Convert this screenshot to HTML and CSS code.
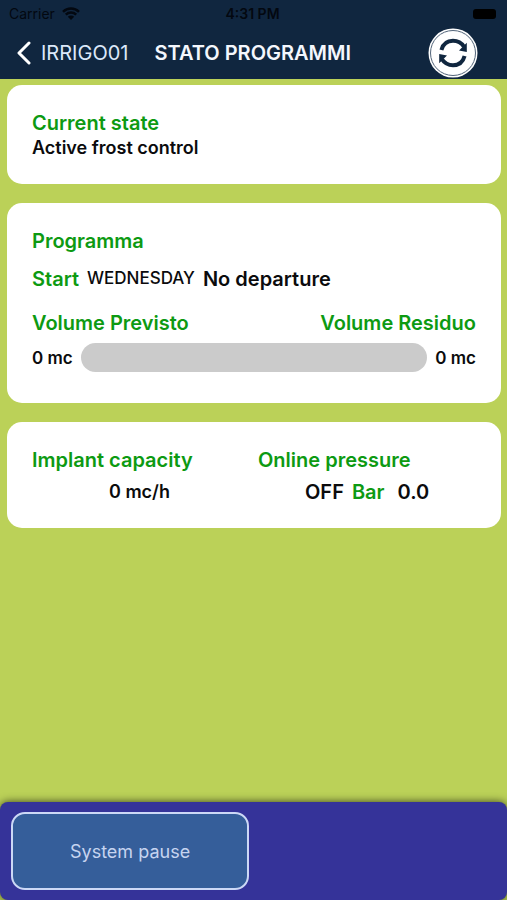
FILE: index.html
```html
<!DOCTYPE html>
<html lang="en">
<head>
<meta charset="utf-8">
<meta name="viewport" content="width=device-width, initial-scale=1">
<title>Stato programmi</title>
<link rel="stylesheet" href="styles.css">
</head>
<body>
<div class="app">
  <header class="header">
    <div class="status">
      <span class="carrier">Carrier
        <svg class="wifi" viewBox="0 0 18 13" aria-hidden="true">
          <path d="M1 4.800a11.500 11.500 0 0 1 16 0M3.800 7.700a7.500 7.500 0 0 1 10.400 0"/>
          <path class="dot" d="M9 13 5.800 9.800a4.600 4.600 0 0 1 6.400 0z"/>
        </svg>
      </span>
      <span class="time">4:31 PM</span>
      <span class="battery-slot"><span class="battery"></span></span>
    </div>
    <nav class="nav">
      <a class="back" href="#">
        <svg class="chevron" viewBox="0 0 14 24" aria-hidden="true"><path d="M12 2 2 12l10 10"/></svg>
        IRRIGO01
      </a>
      <h1 class="title">STATO PROGRAMMI</h1>
      <button class="refresh" type="button" aria-label="Refresh">
        <svg viewBox="0 0 50 50" aria-hidden="true">
          <circle class="disc" cx="25" cy="25" r="24.500"/>
          <circle class="ring" cx="25" cy="25" r="22.500"/>
          <path class="arc" d="M13.400 22C15 16 19.500 12.800 25 12.800c4.800 0 8.600 2.200 11 6M36.600 28C35 34 30.500 37.200 25 37.200c-4.800 0-8.600-2.200-11-6"/>
          <path class="tip" d="M38.800 14.800V24L31 22.600zM11.200 35.200V26L19 27.400z"/>
        </svg>
      </button>
    </nav>
  </header>

  <main class="cards">
    <section class="card">
      <h2 class="label">Current state</h2>
      <p class="state">Active frost control</p>
    </section>

    <section class="card program">
      <h2 class="label">Programma</h2>
      <p class="start">
        <span class="label">Start</span>
        <span class="day">WEDNESDAY</span>
        <span class="value">No departure</span>
      </p>
      <div class="volumes">
        <span class="label">Volume Previsto</span>
        <span class="label">Volume Residuo</span>
      </div>
      <div class="meter">
        <span>0 mc</span>
        <div class="bar" role="progressbar" aria-label="Volume" aria-valuenow="0" aria-valuemin="0" aria-valuemax="100"></div>
        <span>0 mc</span>
      </div>
    </section>

    <section class="card readings">
      <div class="reading">
        <h2 class="label">Implant capacity</h2>
        <p class="capacity">0 mc/h</p>
      </div>
      <div class="reading">
        <h2 class="label">Online pressure</h2>
        <p class="pressure"><span>OFF</span> <span class="label">Bar</span> <span class="number">0.0</span></p>
      </div>
    </section>
  </main>

  <footer class="footer">
    <button class="pause" type="button">System pause</button>
  </footer>
</div>
</body>
</html>
```

FILE: styles.css
```css
* {
  box-sizing: border-box;
}

body {
  margin: 0;
  font-family: Inter, "Liberation Sans", sans-serif;
  font-weight: 560;
  color: #0b0b0d;
  background: #bbd158;
}

h1, h2, p {
  margin: 0;
  font-weight: 560;
}

.app {
  display: flex;
  flex-direction: column;
  min-height: 100vh;
}

.header {
  background: #10263f;
}

.status {
  display: grid;
  grid-template-columns: 1fr auto 1fr;
  align-items: center;
  height: 27px;
  padding: 0 11px 0 9px;
  font-size: 14px;
  line-height: 27px;
  color: #030810;
}

.carrier {
  display: flex;
  align-items: center;
  gap: 7px;
  font-weight: 400;
}

.time {
  font-weight: 600;
}

.wifi {
  width: 18px;
  height: 13px;
  fill: none;
  stroke: #030810;
  stroke-width: 2.5;
}

.wifi .dot {
  fill: #030810;
  stroke: none;
}

.battery-slot {
  display: flex;
  justify-content: flex-end;
}

.battery {
  width: 23px;
  height: 10px;
  border-radius: 3px;
  background: #000;
}

.nav {
  display: flex;
  align-items: center;
  height: 52px;
  padding: 0 29px 0 17px;
  color: #f4f7fd;
}

.back {
  display: flex;
  align-items: center;
  gap: 10px;
  font-size: 20px;
  font-weight: 400;
  color: #dce8fa;
  text-decoration: none;
}

.chevron {
  width: 14px;
  height: 24px;
  fill: none;
  stroke: #fff;
  stroke-width: 3;
  stroke-linecap: round;
  stroke-linejoin: round;
}

.title {
  margin-left: 26px;
  font-size: 20px;
  font-weight: 600;
  white-space: nowrap;
}

.refresh {
  width: 50px;
  height: 50px;
  margin-left: auto;
  padding: 0;
  border: 0;
  background: none;
}

.refresh svg {
  display: block;
}

.disc {
  fill: #fff;
}

.ring {
  fill: none;
  stroke: #53657a;
  stroke-width: 1;
}

.arc {
  fill: none;
  stroke: #10263f;
  stroke-width: 4;
}

.tip {
  fill: #10263f;
}

.cards {
  display: flex;
  flex: 1;
  flex-direction: column;
  gap: 19px;
  padding: 6px 6px 19px 7px;
}

.card {
  padding: 26px 25px 24px;
  border-radius: 15px;
  background: #fff;
}

.label {
  font-size: 20px;
  line-height: 24px;
  color: #0d9a12;
}

.state {
  font-size: 18px;
  line-height: 25px;
}

.program {
  padding-bottom: 31px;
}

.start {
  display: flex;
  gap: 8px;
  margin-top: 14px;
  line-height: 24px;
}

.day {
  font-size: 17px;
  font-weight: 500;
  line-height: 23px;
}

.value {
  font-size: 20px;
}

.volumes {
  display: flex;
  justify-content: space-between;
  margin-top: 20px;
}

.meter {
  display: flex;
  align-items: center;
  gap: 8px;
  margin-top: 8px;
  font-size: 17px;
}

.bar {
  flex: 1;
  height: 29px;
  border-radius: 15px;
  background: #cbcbcb;
}

.readings {
  display: grid;
  grid-template-columns: 226px 1fr;
}

.capacity {
  margin-top: 8px;
  padding-left: 77px;
  font-size: 18px;
  line-height: 24px;
}

.pressure {
  display: flex;
  gap: 8px;
  margin-top: 8px;
  padding-left: 47px;
  font-size: 20px;
  line-height: 24px;
}

.number {
  margin-left: 5px;
}

.footer {
  padding: 10px 10px 10px 11px;
  border-radius: 8px;
  background: #353399;
  box-shadow: 0 0 8px rgba(0, 0, 0, 0.7);
}

.pause {
  display: block;
  width: 49%;
  height: 78px;
  border: 2px solid #ccd8f6;
  border-radius: 14px;
  background: #355e9a;
  font-family: inherit;
  font-size: 18px;
  font-weight: 400;
  color: #c6d4f0;
}
```
